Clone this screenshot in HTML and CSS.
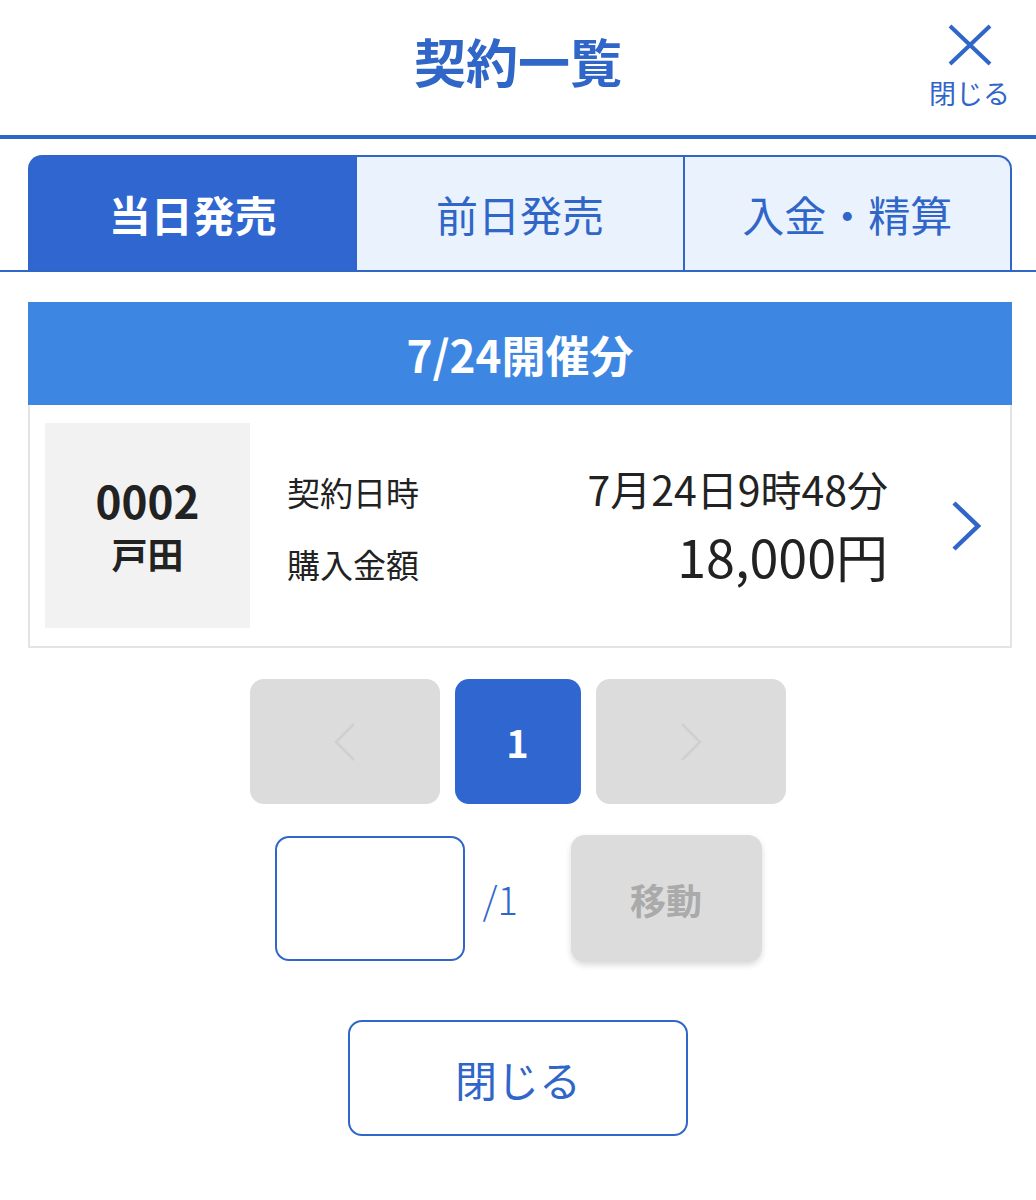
FILE: index.html
```html
<!DOCTYPE html>
<html lang="ja">
<head>
  <meta charset="UTF-8" />
  <title>契約一覧</title>
  <link rel="stylesheet" href="styles.css">
</head>
<body>

<header class="modal-head">
  <h1 class="modal-title">契約一覧</h1>
  <button class="head-close" type="button">
    <svg width="46" height="42" viewBox="0 0 46 42" aria-hidden="true">
      <path d="M3 2 L43 40 M43 2 L3 40" stroke="#3066c8" stroke-width="4" fill="none" />
    </svg>
    <span>閉じる</span>
  </button>
</header>

<nav class="tabs">
  <a class="tab active">当日発売</a>
  <a class="tab">前日発売</a>
  <a class="tab">入金・精算</a>
</nav>

<section class="day">
  <h2 class="day-title">7/24開催分</h2>
  <article class="contract">
    <div class="place">
      <div class="place-no">0002</div>
      <div class="place-name">戸田</div>
    </div>
    <dl class="info">
      <dt>契約日時</dt>
      <dd class="date">7月24日9時48分</dd>
      <dt>購入金額</dt>
      <dd class="amount">18,000円</dd>
    </dl>
    <svg class="chev" width="32" height="52" viewBox="0 0 32 52" aria-hidden="true">
      <path d="M4 3 L28 26 L4 49" stroke="#3066c8" stroke-width="4.5" fill="none" />
    </svg>
  </article>
</section>

<div class="pager">
  <button class="pg-btn pg-arrow" disabled>
    <svg width="26" height="40" viewBox="0 0 26 40"><path d="M22 2 L4 20 L22 38" stroke="#cfcfcf" stroke-width="2.5" fill="none" /></svg>
  </button>
  <button class="pg-btn pg-num">1</button>
  <button class="pg-btn pg-arrow" disabled>
    <svg width="26" height="40" viewBox="0 0 26 40"><path d="M4 2 L22 20 L4 38" stroke="#cfcfcf" stroke-width="2.5" fill="none" /></svg>
  </button>
</div>

<div class="jump">
  <input class="jump-input" type="text" />
  <span class="jump-total">/1</span>
  <button class="jump-btn" disabled>移動</button>
</div>

<div class="foot">
  <button class="close-btn">閉じる</button>
</div>

</body>
</html>
```

FILE: styles.css
```css
body {
  margin: 0;
  font-family: "Noto Sans CJK JP", "Noto Sans", sans-serif;
  background: #fff;
  color: #222;
}
button {
  font-family: inherit;
}
.modal-head {
  display: grid;
  grid-template-columns: 1fr auto 1fr;
  align-items: center;
  height: 139px;
  border-bottom: 4px solid #3066c8;
  box-sizing: border-box;
}
.modal-title {
  grid-column: 2;
  margin: 0;
  font-size: 52px;
  font-weight: 700;
  color: #3066c8;
  line-height: 1;
  padding-bottom: 14px;
}
.head-close {
  grid-column: 3;
  justify-self: end;
  margin-right: 26px;
  margin-bottom: 6px;
  background: none;
  border: none;
  padding: 0;
  display: flex;
  flex-direction: column;
  align-items: center;
  gap: 13px;
  color: #3066c8;
  font-size: 27px;
  line-height: 1;
}
.tabs {
  display: flex;
  margin-top: 16px;
  padding: 0 24px 0 28px;
  border-bottom: 2px solid #3066c8;
}
.tab {
  flex: 1;
  height: 115px;
  display: flex;
  align-items: center;
  justify-content: center;
  background: #e9f2fd;
  color: #3066c8;
  font-size: 42px;
  border: 2px solid #3066c8;
  border-bottom: none;
  border-left: none;
  box-sizing: border-box;
}
.tab:first-child {
  border-top-left-radius: 14px;
  border-left: 2px solid #3066c8;
}
.tab:last-child {
  border-top-right-radius: 14px;
}
.tab.active {
  background: #3066d0;
  color: #fff;
  font-weight: 700;
}
.day {
  margin: 30px 24px 0 28px;
}
.day-title {
  margin: 0;
  height: 103px;
  display: flex;
  align-items: center;
  justify-content: center;
  background: #3d87e2;
  color: #fff;
  font-size: 44px;
  font-weight: 700;
}
.contract {
  display: flex;
  align-items: center;
  height: 243px;
  box-sizing: border-box;
  border: 2px solid #e4e4e4;
  border-top: none;
  padding: 0 28px 0 15px;
}
.place {
  width: 205px;
  height: 205px;
  background: #f2f2f2;
  display: flex;
  flex-direction: column;
  align-items: center;
  justify-content: center;
  font-weight: 700;
  color: #222;
}
.place-no {
  font-size: 44px;
  line-height: 1.25;
}
.place-name {
  font-size: 36px;
  line-height: 1.4;
}
.info {
  flex: 1;
  display: grid;
  grid-template-columns: auto 1fr;
  align-items: baseline;
  margin: 0 62px 0 37px;
}
.info dt {
  font-size: 33px;
}
.info dd {
  margin: 0;
  text-align: right;
}
.date {
  font-size: 41px;
  line-height: 60px;
}
.amount {
  font-size: 52px;
  line-height: 76px;
}
.chev {
  flex: none;
}
.pager {
  display: flex;
  justify-content: center;
  gap: 15px;
  margin-top: 31px;
  padding-right: 1px;
}
.pg-btn {
  height: 125px;
  border: none;
  border-radius: 14px;
  display: flex;
  align-items: center;
  justify-content: center;
}
.pg-arrow {
  width: 190px;
  background: #dcdcdc;
}
.pg-num {
  width: 126px;
  background: #3066d0;
  color: #fff;
  font-size: 38px;
  font-weight: 700;
}
.jump {
  display: flex;
  justify-content: center;
  align-items: center;
  margin-top: 31px;
}
.jump-input {
  width: 190px;
  height: 125px;
  box-sizing: border-box;
  border: 2.5px solid #3066c8;
  border-radius: 14px;
  font-size: 36px;
}
.jump-total {
  width: 106px;
  padding-left: 18px;
  box-sizing: border-box;
  color: #3066c8;
  font-size: 38px;
  font-weight: 300;
}
.jump-btn {
  width: 191px;
  height: 127px;
  border: none;
  border-radius: 14px;
  background: #dcdcdc;
  color: #aaa;
  font-size: 36px;
  font-weight: 700;
  box-shadow: 0 3px 6px rgba(0, 0, 0, 0.15);
}
.foot {
  display: flex;
  justify-content: center;
  margin-top: 58px;
}
.close-btn {
  width: 340px;
  height: 116px;
  background: #fff;
  border: 2.5px solid #3066c8;
  border-radius: 14px;
  color: #3066c8;
  font-size: 42px;
}
```
